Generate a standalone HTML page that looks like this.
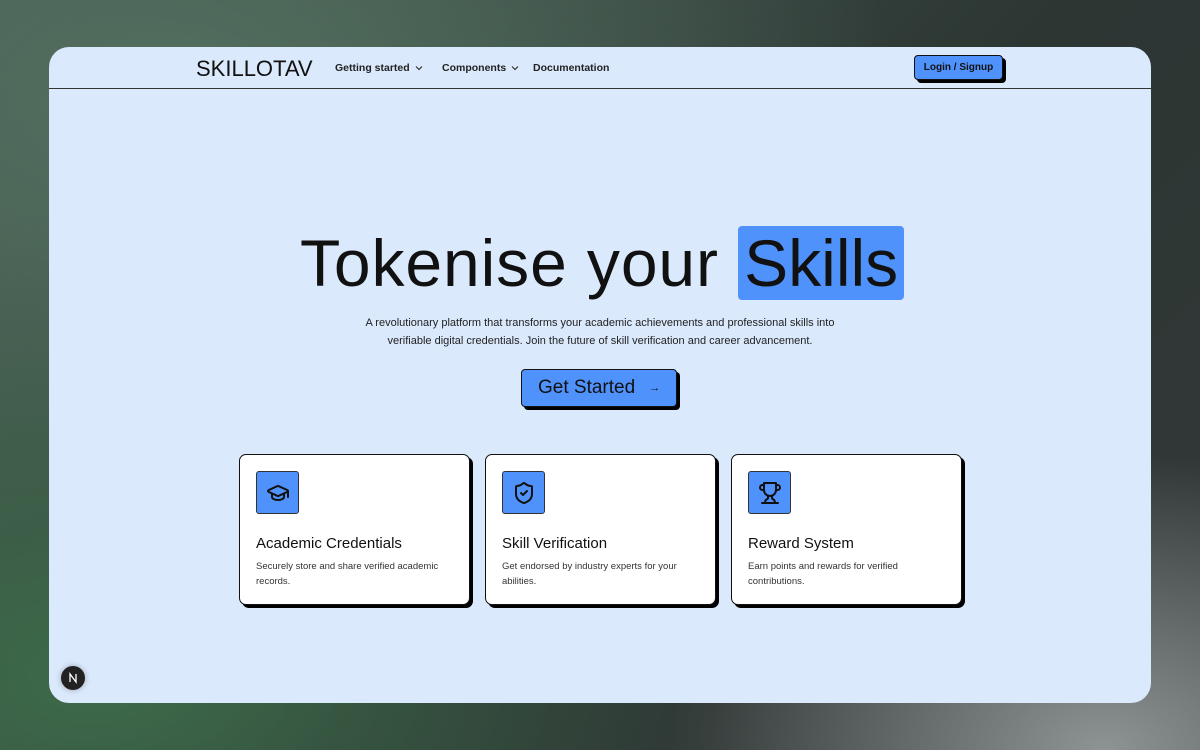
<!DOCTYPE html>
<html><head><meta charset="utf-8"><style>
*{box-sizing:border-box;margin:0;padding:0}
body{width:1200px;height:750px;overflow:hidden;font-family:"Liberation Sans",sans-serif;color:#111;
background:radial-gradient(ellipse at 8% 90%,#3d6b4a 0%,transparent 40%),radial-gradient(ellipse at 15% 15%,#52705f 0%,transparent 50%),radial-gradient(ellipse at 92% 100%,#8e9494 0%,transparent 28%),linear-gradient(135deg,#4a5d55,#2c3633 55%,#333838);position:relative}
.win{position:absolute;left:49px;top:47px;width:1102px;height:656px;background:#dbe9fc;border-radius:20px;overflow:hidden}
.hdr{position:absolute;left:0;top:0;width:100%;height:42px;border-bottom:1px solid #333}
.logo{position:absolute;left:147px;top:9px;font-size:22px}
.nav{position:absolute;top:15px;font-size:10.5px;font-weight:bold;color:#222}
.nav svg{vertical-align:middle;margin-left:5px}
.btn{position:absolute;background:#5092fb;border:1.5px solid #111;border-radius:4px;box-shadow:3px 3px 0 #000;color:#111;display:flex;align-items:center}
h1{position:absolute;left:251px;top:178px;font-size:66px;font-weight:normal;letter-spacing:0.9px;white-space:nowrap}
h1 span{background:#5092fb;border-radius:4px;padding:0 6px;letter-spacing:0}
.sub{position:absolute;left:0;width:100%;top:267px;text-align:center;font-size:11px;line-height:18px;color:#222}
.card{position:absolute;top:407px;width:231px;height:151px;background:#fff;border:1.5px solid #111;border-radius:7px;box-shadow:3px 3px 0 #000}
.ic{position:absolute;left:16px;top:16px;width:43px;height:43px;background:#5092fb;border:1px solid #333;border-radius:3px;display:flex;align-items:center;justify-content:center}
.card h3{position:absolute;left:16px;top:80px;font-size:15px;font-weight:normal}
.card p{position:absolute;left:16px;top:104px;width:205px;font-size:9.5px;line-height:15px;color:#333}
.n{position:absolute;left:12px;top:619px;width:24px;height:24px;border-radius:50%;background:#222;box-shadow:0 0 6px rgba(0,0,0,.3);display:flex;align-items:center;justify-content:center}
</style></head><body>
<div class="win">
 <div class="hdr">
  <div class="logo">SKILLOTAV</div>
  <div class="nav" style="left:286px">Getting started<svg width="8" height="6" viewBox="0 0 8 6"><path d="M1 1.5 4 4.5 7 1.5" fill="none" stroke="#222" stroke-width="1"/></svg></div>
  <div class="nav" style="left:393px">Components<svg width="8" height="6" viewBox="0 0 8 6"><path d="M1 1.5 4 4.5 7 1.5" fill="none" stroke="#222" stroke-width="1"/></svg></div>
  <div class="nav" style="left:484px">Documentation</div>
  <div class="btn" style="left:865px;top:8px;width:89px;height:25px;font-size:10px;font-weight:bold;justify-content:center">Login / Signup</div>
 </div>
 <h1>Tokenise your <span>Skills</span></h1>
 <div class="sub">A revolutionary platform that transforms your academic achievements and professional skills into<br>verifiable digital credentials. Join the future of skill verification and career advancement.</div>
 <div class="btn" style="left:472px;top:322px;width:156px;height:38px;font-size:19px;padding-left:16px">Get Started <span style="font-size:11px;margin-left:14px">→</span></div>

 <div class="card" style="left:190px"><div class="ic"><svg width="24" height="24" viewBox="0 0 24 24" fill="none" stroke="#111" stroke-width="2" stroke-linecap="round" stroke-linejoin="round"><path d="M21.4 10.9a1 1 0 0 0 0-1.8L12.8 5.2a2 2 0 0 0-1.6 0L2.6 9.1a1 1 0 0 0 0 1.8l8.6 3.9a2 2 0 0 0 1.6 0z"/><path d="M22 10v6"/><path d="M6 12.5V16a6 3 0 0 0 12 0v-3.5"/></svg></div>
  <h3>Academic Credentials</h3><p>Securely store and share verified academic records.</p></div>
 <div class="card" style="left:436px"><div class="ic"><svg width="24" height="24" viewBox="0 0 24 24" fill="none" stroke="#111" stroke-width="2" stroke-linecap="round" stroke-linejoin="round"><path d="M20 13c0 5-3.5 7.5-7.7 9a1 1 0 0 1-.7 0C7.5 20.5 4 18 4 13V6a1 1 0 0 1 1-1c2 0 4.5-1.2 6.2-2.7a1.2 1.2 0 0 1 1.5 0C14.5 3.8 17 5 19 5a1 1 0 0 1 1 1z"/><path d="m9 12 2 2 4-4"/></svg></div>
  <h3>Skill Verification</h3><p>Get endorsed by industry experts for your abilities.</p></div>
 <div class="card" style="left:682px"><div class="ic"><svg width="24" height="24" viewBox="0 0 24 24" fill="none" stroke="#111" stroke-width="2" stroke-linecap="round" stroke-linejoin="round"><path d="M6 9H4.5a2.5 2.5 0 0 1 0-5H6"/><path d="M18 9h1.5a2.5 2.5 0 0 0 0-5H18"/><path d="M4 22h16"/><path d="M10 14.7V17c0 .6-.5 1-1 1.2C7.8 18.8 7 20.2 7 22"/><path d="M14 14.7V17c0 .6.5 1 1 1.2 1.2.6 2 2 2 3.8"/><path d="M18 2H6v7a6 6 0 0 0 12 0V2z"/></svg></div>
  <h3>Reward System</h3><p>Earn points and rewards for verified contributions.</p></div>
 <div class="n"><svg width="12" height="12" viewBox="0 0 12 12"><path d="M3 10V2l6 8V2" fill="none" stroke="#fff" stroke-width="1.3"/></svg></div>
</div>
</body></html>
